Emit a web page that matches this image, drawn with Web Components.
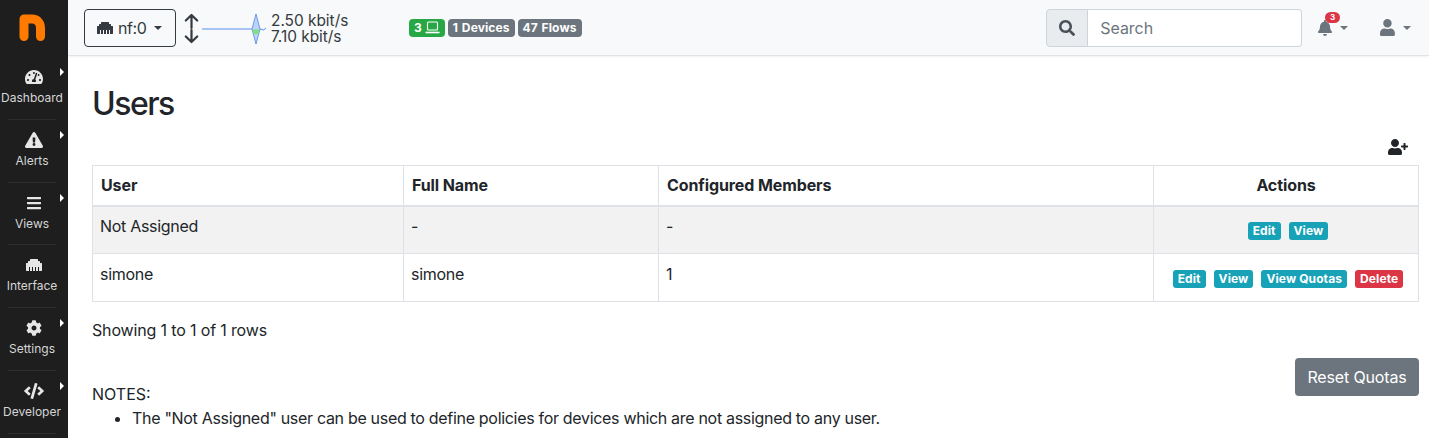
<!DOCTYPE html>
<html>
<head>
<meta charset="utf-8">
<title>Users</title>
<style>
  html, body { margin: 0; height: 100%; overflow: hidden; background: #fff; }
  body { font: 16px/24px Inter, "Liberation Sans", sans-serif; color: #212529; }
</style>
</head>
<body>
<nf-app></nf-app>

<script>
const ICONS = {
  tach: ["0 0 576 512", "M288 32C128.94 32 0 160.94 0 320c0 52.8 14.25 102.26 39.06 144.8 5.61 9.62 16.3 15.2 27.44 15.2h443c11.14 0 21.83-5.58 27.44-15.2C561.75 422.26 576 372.8 576 320c0-159.06-128.94-288-288-288zm0 64c14.71 0 26.58 10.13 30.32 23.65-1.11 2.26-2.64 4.23-3.45 6.67l-9.22 27.67c-5.13 3.49-10.97 6.01-17.64 6.01-17.67 0-32-14.33-32-32S270.33 96 288 96zM96 384c-17.67 0-32-14.33-32-32s14.33-32 32-32 32 14.33 32 32-14.33 32-32 32zm48-160c-17.67 0-32-14.33-32-32s14.33-32 32-32 32 14.33 32 32-14.33 32-32 32zm246.77-72.41l-61.33 184C343.13 347.33 352 364.54 352 384c0 11.72-3.38 22.55-8.88 32H232.88c-5.5-9.45-8.88-20.28-8.88-32 0-33.94 26.5-61.43 59.9-63.59l61.34-184.01c4.17-12.56 17.73-19.45 30.36-15.17 12.57 4.19 19.35 17.79 15.17 30.36zm14.66 57.2l15.52-46.55c3.47-1.29 7.13-2.23 11.05-2.23 17.67 0 32 14.33 32 32s-14.33 32-32 32c-11.38-.01-20.89-6.28-26.57-15.22zM480 384c-17.67 0-32-14.33-32-32s14.33-32 32-32 32 14.33 32 32-14.33 32-32 32z"],
  warn: ["0 0 576 512", "M569.517 440.013C587.975 472.007 564.806 512 527.94 512H48.054c-36.937 0-59.999-40.055-41.577-71.987L246.423 23.985c18.467-32.009 64.72-31.951 83.154 0l239.94 416.028zM288 354c-25.405 0-46 20.595-46 46s20.595 46 46 46 46-20.595 46-46-20.595-46-46-46zm-43.673-165.346l7.418 136c.347 6.364 5.609 11.346 11.982 11.346h48.546c6.373 0 11.635-4.982 11.982-11.346l7.418-136c.375-6.874-5.098-12.654-11.982-12.654h-63.383c-6.884 0-12.356 5.78-11.981 12.654z"],
  bars: ["0 0 448 512", "M16 132h416c8.837 0 16-7.163 16-16V76c0-8.837-7.163-16-16-16H16C7.163 60 0 67.163 0 76v40c0 8.837 7.163 16 16 16zm0 160h416c8.837 0 16-7.163 16-16v-40c0-8.837-7.163-16-16-16H16c-8.837 0-16 7.163-16 16v40c0 8.837 7.163 16 16 16zm0 160h416c8.837 0 16-7.163 16-16v-40c0-8.837-7.163-16-16-16H16c-8.837 0-16 7.163-16 16v40c0 8.837 7.163 16 16 16z"],
  eth: ["0 0 512 512", "M496 192h-48v-48c0-8.8-7.2-16-16-16h-48V80c0-8.8-7.2-16-16-16H144c-8.8 0-16 7.2-16 16v48H80c-8.8 0-16 7.2-16 16v48H16c-8.8 0-16 7.2-16 16v224c0 8.8 7.2 16 16 16h80V320h32v128h64V320h32v128h64V320h32v128h64V320h32v128h80c8.8 0 16-7.2 16-16V208c0-8.8-7.2-16-16-16z"],
  cog: ["0 0 512 512", "M487.4 315.7l-42.6-24.6c4.3-23.2 4.3-47 0-70.2l42.6-24.6c4.9-2.8 7.1-8.6 5.5-14-11.1-35.6-30-67.8-54.7-94.6-3.8-4.1-10-5.1-14.8-2.3L380.8 110c-17.9-15.4-38.5-27.3-60.8-35.1V25.8c0-5.6-3.9-10.5-9.4-11.7-36.7-8.2-74.3-7.8-109.2 0-5.5 1.2-9.4 6.1-9.4 11.7V75c-22.2 7.9-42.8 19.8-60.8 35.1L88.7 85.5c-4.9-2.8-11-1.9-14.8 2.3-24.7 26.7-43.6 58.9-54.7 94.6-1.7 5.4.6 11.2 5.5 14L67.3 221c-4.3 23.2-4.3 47 0 70.2l-42.6 24.6c-4.9 2.8-7.1 8.6-5.5 14 11.1 35.6 30 67.8 54.7 94.6 3.8 4.1 10 5.1 14.8 2.3l42.6-24.6c17.9 15.4 38.5 27.3 60.8 35.1v49.2c0 5.6 3.9 10.5 9.4 11.7 36.7 8.2 74.3 7.8 109.2 0 5.5-1.2 9.4-6.1 9.4-11.7v-49.2c22.2-7.9 42.8-19.8 60.8-35.1l42.6 24.6c4.9 2.8 11 1.9 14.8-2.3 24.7-26.7 43.6-58.9 54.7-94.6 1.5-5.5-.7-11.3-5.6-14.1zM256 336c-44.1 0-80-35.9-80-80s35.9-80 80-80 80 35.9 80 80-35.9 80-80 80z"],
  code: ["0 0 640 512", "M278.9 511.5l-61-17.7c-6.4-1.8-10-8.5-8.2-14.9L346.2 8.7c1.8-6.4 8.5-10.1 14.9-8.2l61 17.7c6.4 1.8 10 8.5 8.2 14.9L293.8 503.3c-1.9 6.4-8.5 10.1-14.9 8.2zm-114-112.2l43.5-46.4c4.6-4.9 4.3-12.7-.8-17.2L117 256l90.6-79.7c5.1-4.5 5.5-12.3.8-17.2l-43.5-46.4c-4.5-4.8-12.1-5.1-17-.5L3.8 247.2c-5.1 4.7-5.1 12.8 0 17.5l144.1 135.1c4.9 4.6 12.5 4.4 17-.5zm327.2.6l144.1-135.1c5.1-4.7 5.1-12.8 0-17.5L492.1 112.1c-4.8-4.5-12.4-4.3-17 .5L431.6 159c-4.6 4.9-4.3 12.7.8 17.2L523 256l-90.6 79.7c-5.1 4.5-5.5 12.3-.8 17.2l43.5 46.4c4.5 4.9 12.1 5.1 17 .6z"],
  search: ["0 0 512 512", "M505 442.7L405.3 343c-4.5-4.5-10.6-7-17-7H372c27.6-35.3 44-79.7 44-128C416 93.1 322.9 0 208 0S0 93.1 0 208s93.1 208 208 208c48.3 0 92.7-16.4 128-44v16.3c0 6.4 2.5 12.5 7 17l99.7 99.7c9.4 9.4 24.6 9.4 33.9 0l28.3-28.3c9.4-9.4 9.4-24.6.1-34zM208 336c-70.7 0-128-57.2-128-128 0-70.7 57.2-128 128-128 70.7 0 128 57.2 128 128 0 70.7-57.2 128-128 128z"],
  bell: ["0 0 448 512", "M224 512c35.32 0 63.97-28.65 63.97-64H160.03c0 35.35 28.65 64 63.97 64zm215.39-149.71c-19.32-20.76-55.47-51.99-55.47-154.29 0-77.7-54.48-139.9-127.94-155.16V32c0-17.67-14.32-32-31.98-32s-31.98 14.33-31.98 32v20.84C118.56 68.1 64.08 130.3 64.08 208c0 102.3-36.15 133.53-55.47 154.29-6 6.45-8.66 14.16-8.61 21.71.11 16.4 12.98 32 32.1 32h383.8c19.12 0 32-15.6 32.1-32 .05-7.55-2.61-15.27-8.61-21.71z"],
  user: ["0 0 448 512", "M224 256c70.7 0 128-57.3 128-128S294.7 0 224 0 96 57.3 96 128s57.3 128 128 128zm89.6 32h-16.7c-22.2 10.2-46.9 16-72.9 16s-50.6-5.8-72.9-16h-16.7C60.2 288 0 348.2 0 422.4V464c0 26.5 21.5 48 48 48h352c26.5 0 48-21.5 48-48v-41.6c0-74.2-60.2-134.4-134.4-134.4z"],
  userplus: ["0 0 640 512", "M624 208h-64v-64c0-8.8-7.2-16-16-16h-32c-8.8 0-16 7.2-16 16v64h-64c-8.8 0-16 7.2-16 16v32c0 8.8 7.2 16 16 16h64v64c0 8.8 7.2 16 16 16h32c8.8 0 16-7.2 16-16v-64h64c8.8 0 16-7.2 16-16v-32c0-8.8-7.2-16-16-16zm-400 48c70.7 0 128-57.3 128-128S294.7 0 224 0 96 57.3 96 128s57.3 128 128 128zm89.6 32h-16.7c-22.2 10.2-46.9 16-72.9 16s-50.6-5.8-72.9-16h-16.7C60.2 288 0 348.2 0 422.4V464c0 26.5 21.5 48 48 48h352c26.5 0 48-21.5 48-48v-41.6c0-74.2-60.2-134.4-134.4-134.4z"],
};

class NfIcon extends HTMLElement {
  connectedCallback() {
    const [box, d] = ICONS[this.getAttribute("name")];
    const h = this.getAttribute("size") || 16;
    const [, , vw, vh] = box.split(" ").map(Number);
    const root = this.shadowRoot || this.attachShadow({ mode: "open" });
    root.innerHTML = `
      <style>:host { display: inline-flex; line-height: 0; } svg { display: block; }</style>
      <svg width="${(h * vw) / vh}" height="${h}" viewBox="${box}" fill="currentColor"><path d="${d}"/></svg>`;
  }
}

class NfSideItem extends HTMLElement {
  constructor() {
    super();
    const icon = this.getAttribute("icon");
    const size = this.getAttribute("size") || 16;
    const arrow = this.hasAttribute("arrow") ? '<i class="arrow"></i>' : "";
    this.attachShadow({ mode: "open" }).innerHTML = `
      <style>
        :host {
          display: flex; flex-direction: column; align-items: center;
          position: relative; height: 62.8px; box-sizing: border-box;
          padding-top: 10px; color: #d6d6d6;
        }
        :host::after {
          content: ""; position: absolute; left: 8px; right: 12px; bottom: 0;
          border-bottom: 1px solid #2e2e2e;
        }
        .ic { height: 20px; display: flex; align-items: center; color: #e6e6e6; }
        .lb { font-size: 12px; line-height: 18px; margin-top: 2px; white-space: nowrap; margin-right: 4px; }
        .arrow {
          position: absolute; left: 60px; top: 11px;
          border-left: 4px solid #fff; border-top: 4px solid transparent; border-bottom: 4px solid transparent;
        }
      </style>
      <div class="ic"><nf-icon name="${icon}" size="${size}"></nf-icon></div>
      <div class="lb"><slot></slot></div>
      ${arrow}`;
  }
}

class NfSidebar extends HTMLElement {
  constructor() {
    super();
    this.attachShadow({ mode: "open" }).innerHTML = `
      <style>
        :host { display: block; width: 68px; flex: none; background: #1e1e1e; height: 438px; overflow: hidden; }
        .logo { height: 57px; display: flex; }
        svg { display: block; }
      </style>
      <div class="logo">
        <svg width="68" height="57" viewBox="0 0 68 57">
          <path d="M24 36.5V19H32C37.5 19 40.5 23 40.5 28V36.5" fill="none" stroke="#ff7a00" stroke-width="9" stroke-linecap="round" stroke-linejoin="round"/>
        </svg>
      </div>
      <nf-side-item icon="tach" arrow>Dashboard</nf-side-item>
      <nf-side-item icon="warn" arrow>Alerts</nf-side-item>
      <nf-side-item icon="bars" arrow>Views</nf-side-item>
      <nf-side-item icon="eth">Interface</nf-side-item>
      <nf-side-item icon="cog" arrow>Settings</nf-side-item>
      <nf-side-item icon="code" arrow>Developer</nf-side-item>`;
  }
}

class NfBadge extends HTMLElement {
  constructor() {
    super();
    this.attachShadow({ mode: "open" }).innerHTML = `
      <style>
        :host {
          display: inline-flex; align-items: center; height: 18px; box-sizing: border-box;
          padding: 0 5px; border-radius: 4px; gap: 3px; word-spacing: .8px;
          font-size: 12px; line-height: 18px; font-weight: 700; color: #fff; letter-spacing: .1px;
          background: var(--bg, #6c757d); white-space: nowrap;
        }
      </style><slot></slot>`;
  }
}

class NfTopbar extends HTMLElement {
  constructor() {
    super();
    this.attachShadow({ mode: "open" }).innerHTML = `
      <style>
        :host {
          display: flex; align-items: center; height: 56px; box-sizing: border-box; flex: none;
          background: #f8f9fa; border-bottom: 1px solid #e4e4e4; box-shadow: 0 1px 2px rgba(0,0,0,.06);
          padding-left: 16px; position: relative;
        }
        .if {
          display: flex; align-items: center; gap: 5px; width: 92px; height: 38px; box-sizing: border-box;
          border: 1px solid #343a40; border-radius: 4px; padding-left: 12px; color: #343a40; letter-spacing: -.4px;
        }
        .caret { border-top: 4px solid currentColor; border-left: 4px solid transparent; border-right: 4px solid transparent; display: block; }
        .if .caret { margin-left: 3px; }
        .updown { margin-left: 8px; display: block; flex: none; }
        .spark { display: block; margin-left: 3px; flex: none; }
        .rate { margin-left: 5px; padding-top: 2px; font-size: 15.4px; line-height: 16px; color: #343a40; width: 138px; flex: none; white-space: nowrap; }
        .badges { display: flex; gap: 3px; }
        .grow { flex: 1; }
        .search { display: flex; height: 38px; width: 256px; }
        .addon {
          width: 42px; box-sizing: border-box; display: flex; align-items: center; justify-content: center;
          background: #e9ecef; border: 1px solid #ced4da; border-radius: 4px 0 0 4px; color: #495057;
        }
        .field {
          flex: 1; box-sizing: border-box; background: #fff; border: 1px solid #ced4da; border-left: 0;
          border-radius: 0 4px 4px 0; padding-left: 12px; line-height: 36px; color: #6c757d;
        }
        .menu { display: flex; align-items: center; gap: 8px; color: #6c757d; position: relative; }
        .bell { margin-left: 16px; }
        .user { margin-left: 32px; margin-right: 18px; }
        .count {
          position: absolute; left: 7px; top: -8px; height: 11px; width: 15px; border-radius: 6px;
          background: #dc3545; color: #fff; font-size: 8px; line-height: 11px; font-weight: 700; text-align: center;
        }
      </style>
      <div class="if"><nf-icon name="eth" size="16"></nf-icon><span>nf:0</span><i class="caret"></i></div>
      <svg class="updown" width="15" height="32" viewBox="0 0 15 32" fill="none" stroke="#343a40" stroke-width="2.2" stroke-linecap="round" stroke-linejoin="round">
        <path d="M7.5 3V16M1.8 8.5L7.5 3 13.2 8.5M7.5 18V29.5M1.8 24.5L7.5 30 13.2 24.5"/>
      </svg>
      <svg class="spark" width="64" height="32" viewBox="0 0 64 32">
        <path d="M50 17L54 2 58 17 54 32Z" fill="#b9d3fb" stroke="#6b9be8" stroke-width="1"/>
        <path d="M50.5 17.5H57.5L56.2 22H51.7Z" fill="#7fe07c"/>
        <path d="M0 17H50M58 17L61.5 18 64 16" fill="none" stroke="#5b8def" stroke-width="1"/>
      </svg>
      <div class="rate"><div>2.50 kbit/s</div><div>7.10 kbit/s</div></div>
      <div class="badges">
        <nf-badge style="--bg:#28a745">3
          <svg width="15" height="13" viewBox="0 0 15 13" fill="none" stroke="#fff" stroke-width="1.1"><rect x="2.5" y="1" width="10" height="8" rx="1"/><path d="M0.5 11.5H14.5" stroke-width="1.6"/></svg>
        </nf-badge>
        <nf-badge>1 Devices</nf-badge>
        <nf-badge>47 Flows</nf-badge>
      </div>
      <div class="grow"></div>
      <div class="search">
        <div class="addon"><nf-icon name="search" size="16"></nf-icon></div>
        <div class="field">Search</div>
      </div>
      <div class="menu bell"><nf-icon name="bell" size="16"></nf-icon><span class="count">3</span><i class="caret"></i></div>
      <div class="menu user"><nf-icon name="user" size="17"></nf-icon><i class="caret"></i></div>`;
  }
}

class NfBtn extends HTMLElement {
  constructor() {
    super();
    this.attachShadow({ mode: "open" }).innerHTML = `
      <style>
        :host {
          display: inline-block; height: 18px; box-sizing: border-box; padding: 0 5px;
          border-radius: 3px; background: var(--bg, #17a2b8); color: #fff; letter-spacing: .1px;
          font-size: 12px; line-height: 18px; font-weight: 700; white-space: nowrap; vertical-align: middle;
        }
      </style><slot></slot>`;
  }
}

class NfUsersTable extends HTMLElement {
  constructor() {
    super();
    this.attachShadow({ mode: "open" }).innerHTML = `
      <style>
        :host { display: block; }
        table { border-collapse: collapse; width: 1326px; table-layout: fixed; font-size: 16px; line-height: 24px; }
        th, td { border: 1px solid #dee2e6; padding: 0 8px; text-align: left; box-sizing: border-box; }
        th { height: 40px; font-weight: 700; border-bottom-width: 2px; letter-spacing: -.1px; }
        td { height: 47.5px; vertical-align: top; padding: 7.5px 8px 0 7px; letter-spacing: -.3px; }
        .last td { height: 48.5px; padding-top: 8px; }
        td.act { text-align: center; vertical-align: middle; padding: 0 0 0 4px; }
        .act nf-btn { margin: 0 4px; }
        .striped td { background: #f2f2f2; }
      </style>
      <table>
        <colgroup><col style="width:311px"><col style="width:255px"><col style="width:495px"><col style="width:265px"></colgroup>
        <thead><tr><th>User</th><th>Full Name</th><th>Configured Members</th><th style="text-align:center">Actions</th></tr></thead>
        <tbody>
          <tr class="striped"><td>Not Assigned</td><td>-</td><td>-</td>
            <td class="act"><nf-btn>Edit</nf-btn><nf-btn>View</nf-btn></td></tr>
          <tr class="last"><td>simone</td><td>simone</td><td>1</td>
            <td class="act"><nf-btn>Edit</nf-btn><nf-btn>View</nf-btn><nf-btn>View Quotas</nf-btn><nf-btn style="--bg:#dc3545">Delete</nf-btn></td></tr>
        </tbody>
      </table>`;
  }
}

class NfUsersPage extends HTMLElement {
  constructor() {
    super();
    this.attachShadow({ mode: "open" }).innerHTML = `
      <style>
        :host { display: block; padding: 24px 10px 0 24px; }
        h1 { margin: 0; font-size: 32px; line-height: 48px; font-weight: 500; letter-spacing: -1.5px; }
        .tools { display: flex; justify-content: flex-end; height: 26px; padding-right: 11px; color: #212529; align-items: flex-start; margin-top: 11px; }
        .rows { margin-top: 16px; letter-spacing: -.15px; }
        .reset-row { display: flex; justify-content: flex-end; margin-top: 16px; height: 38px; }
        .reset {
          width: 124px; height: 38px; background: #6c757d; color: #fff; border-radius: 4px; letter-spacing: -.15px;
          text-align: center; line-height: 38px; white-space: nowrap;
        }
        .notes { margin-top: -14px; }
        ul { margin: 0; padding-left: 40px; letter-spacing: -.31px; }
      </style>
      <h1>Users</h1>
      <div class="tools"><nf-icon name="userplus" size="16"></nf-icon></div>
      <nf-users-table></nf-users-table>
      <div class="rows">Showing 1 to 1 of 1 rows</div>
      <div class="reset-row"><div class="reset">Reset Quotas</div></div>
      <div class="notes">NOTES:
        <ul><li>The "Not Assigned" user can be used to define policies for devices which are not assigned to any user.</li></ul>
      </div>`;
  }
}

class NfApp extends HTMLElement {
  constructor() {
    super();
    this.attachShadow({ mode: "open" }).innerHTML = `
      <style>
        :host { display: flex; height: 438px; overflow: hidden; }
        main { flex: 1; min-width: 0; display: flex; flex-direction: column; }
      </style>
      <nf-sidebar></nf-sidebar>
      <main><nf-topbar></nf-topbar><nf-users-page></nf-users-page></main>`;
  }
}

customElements.define("nf-icon", NfIcon);
customElements.define("nf-side-item", NfSideItem);
customElements.define("nf-sidebar", NfSidebar);
customElements.define("nf-badge", NfBadge);
customElements.define("nf-topbar", NfTopbar);
customElements.define("nf-btn", NfBtn);
customElements.define("nf-users-table", NfUsersTable);
customElements.define("nf-users-page", NfUsersPage);
customElements.define("nf-app", NfApp);
</script>
</body>
</html>
